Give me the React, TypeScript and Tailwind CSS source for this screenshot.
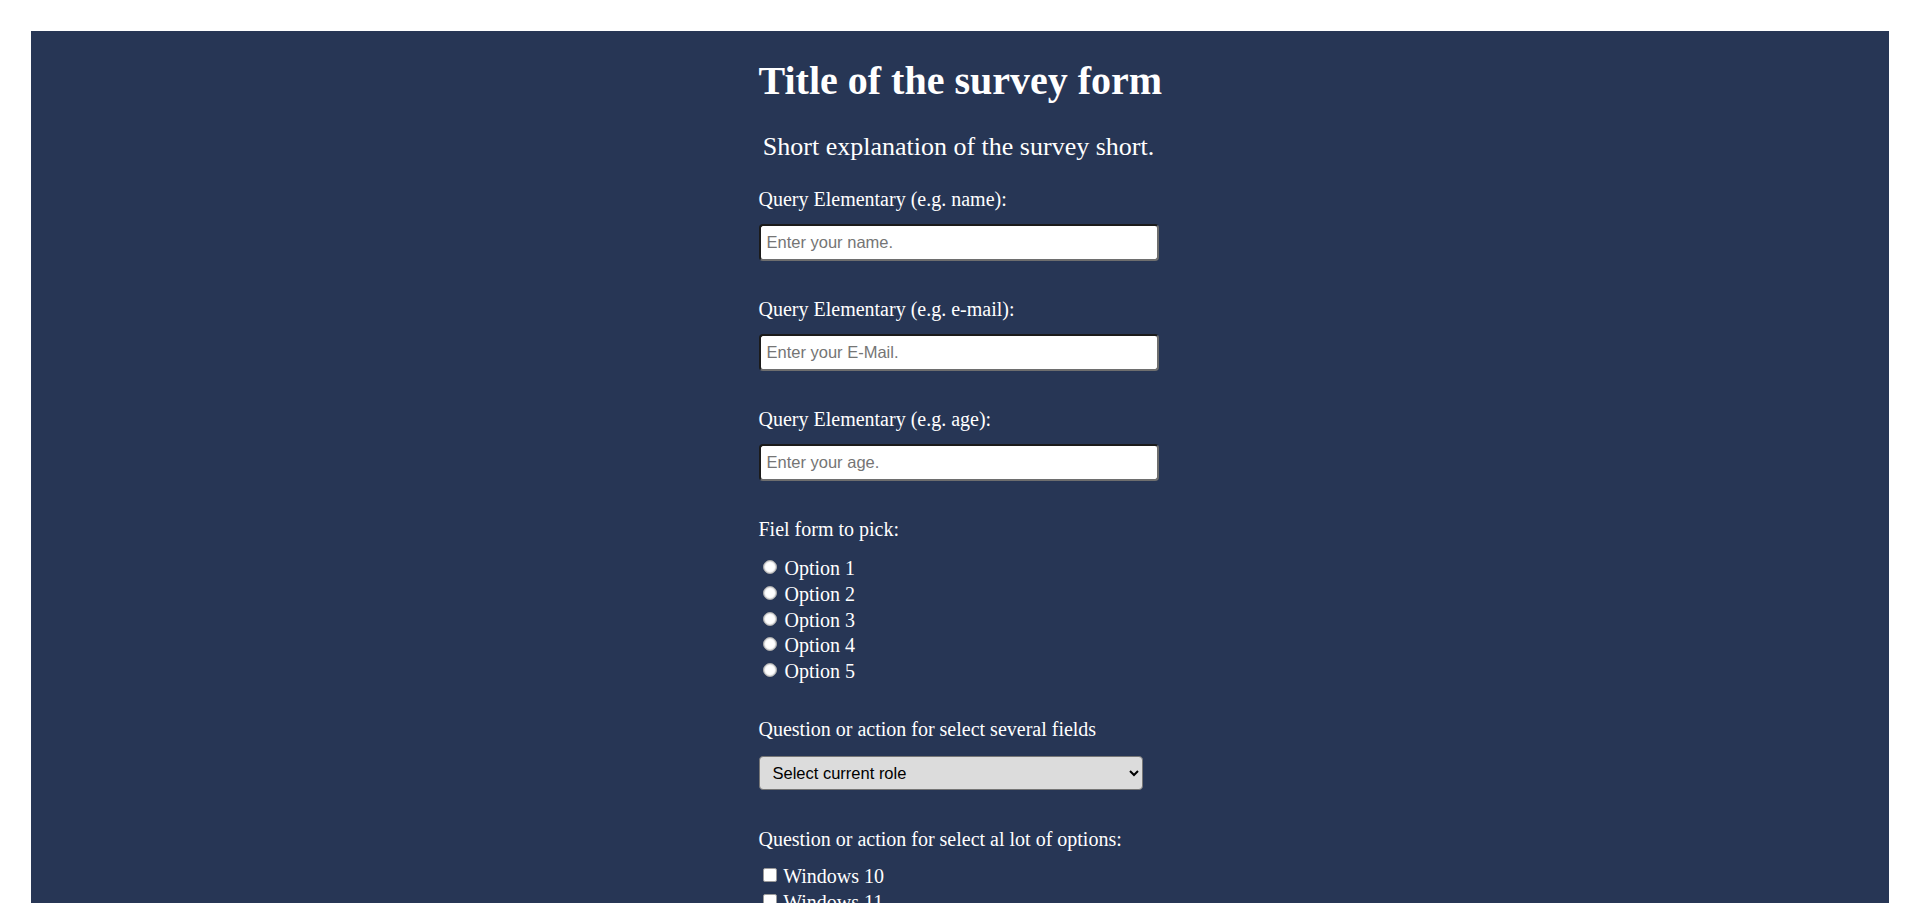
import React from "react";

const serif = "font-['Liberation_Serif','Times_New_Roman',serif]";

function Label({ children, className = "" }: { children: React.ReactNode; className?: string }) {
  return <label className={`block text-[20px] leading-[23px] ${className}`}>{children}</label>;
}

function TextInput({ placeholder, type = "text" }: { placeholder: string; type?: string }) {
  return (
    <input
      type={type}
      placeholder={placeholder}
      className="mt-[13px] block h-[37px] w-[400px] rounded-[4px] border-2 border-t-[#1b1b1b] border-l-[#1b1b1b] border-b-[#6e6e6e] border-r-[#6e6e6e] bg-white pl-[6px] font-['Liberation_Sans',Arial,sans-serif] text-[16.5px] text-black placeholder:text-[#757575] outline-none"
    />
  );
}

export default function App() {
  const options = ["Option 1", "Option 2", "Option 3", "Option 4", "Option 5"];
  const systems = ["Windows 10", "Windows 11", "macOS", "Linux"];
  return (
    <div className={`min-h-screen bg-white px-[31px] pt-[31px] ${serif}`}>
      <div className="bg-[#273655] pr-[3px] pb-[60px] text-white">
        <form className="mx-auto w-[400px]">
          <h1 className="pt-[27px] text-center text-[40px] font-bold leading-[46px] whitespace-nowrap">
            Title of the survey form
          </h1>
          <p className="mt-[28px] text-center text-[26px] leading-[29.4px] whitespace-nowrap">
            Short explanation of the survey short.
          </p>

          <Label className="mt-[27px]">Query Elementary (e.g. name):</Label>
          <TextInput placeholder="Enter your name." />

          <Label className="mt-[37px]">Query Elementary (e.g. e-mail):</Label>
          <TextInput placeholder="Enter your E-Mail." type="email" />

          <Label className="mt-[37px]">Query Elementary (e.g. age):</Label>
          <TextInput placeholder="Enter your age." type="number" />

          <Label className="mt-[37px]">Fiel form to pick:</Label>
          <div className="mt-[15px]">
            {options.map((o) => (
              <div key={o} className="h-[25.6px] text-[20px] leading-[25.6px]">
                <input
                  type="radio"
                  name="pick"
                  className="mt-[3px] mr-[3px] ml-[4px] inline-block h-[14px] w-[14px] appearance-none rounded-full border border-[#a8a8a8] bg-white align-[1px] shadow-[inset_0_0_1.5px_#8a8a8a]"
                />{" "}
                {o}
              </div>
            ))}
          </div>

          <Label className="mt-[34px]">Question or action for select several fields</Label>
          <select className="mt-[15px] block h-[34px] w-[384px] rounded-[4px] border border-[#767676] bg-[#dcdcdc] pl-[9px] font-['Liberation_Sans',Arial,sans-serif] text-[16.5px] text-black">
            <option>Select current role</option>
            <option>Student</option>
            <option>Full time job</option>
            <option>Other</option>
          </select>

          <Label className="mt-[38px]">Question or action for select al lot of options:</Label>
          <div className="mt-[13px]">
            {systems.map((s) => (
              <div key={s} className="h-[25.6px] text-[20px] leading-[25.6px]">
                <input
                  type="checkbox"
                  className="mt-[3px] mr-[2px] mb-[3px] ml-[4px] inline-block h-[14px] w-[14px] appearance-none rounded-[2px] border border-[#9a9a9a] bg-white align-[-2px]"
                />{" "}
                {s}
              </div>
            ))}
          </div>

          <Label className="mt-[35px]">Any comments or suggestions?</Label>
          <textarea
            placeholder="Enter your comment here..."
            className="mt-[13px] block h-[100px] w-[400px] rounded-[4px] border-2 border-[#6e6e6e] bg-white p-[5px] font-['Liberation_Sans',Arial,sans-serif] text-[16px] text-black"
          />
          <button
            type="button"
            className="mt-[20px] block h-[36px] w-[400px] rounded-[4px] bg-[#dcdcdc] font-['Liberation_Sans',Arial,sans-serif] text-[16px] text-black"
          >
            Submit
          </button>
        </form>
      </div>
    </div>
  );
}
